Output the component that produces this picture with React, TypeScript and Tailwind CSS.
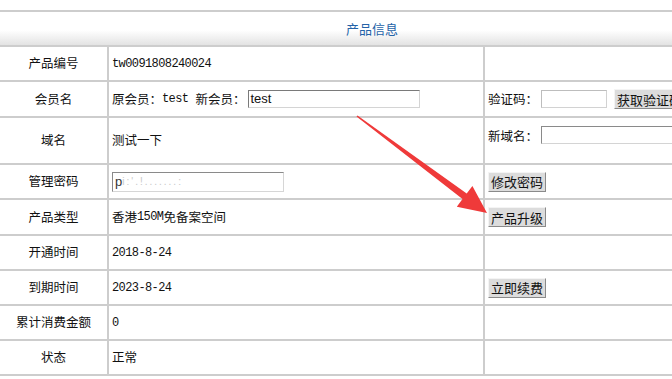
import React from "react";

const cjk = { fontFamily: '"Noto Sans CJK SC", "Noto Sans", sans-serif' };
const mono = { fontFamily: '"Liberation Mono", "Noto Sans CJK SC", monospace' };

function M({ children }: { children: React.ReactNode }) {
  return (
    <span style={mono} className="text-[12px] tracking-[-0.6px]">
      {children}
    </span>
  );
}

function Btn({ children }: { children: React.ReactNode }) {
  return (
    <div
      style={cjk}
      className="h-[20px] px-[2px] flex items-center bg-[#dcdcdc] border border-t-[#f4f4f4] border-l-[#f4f4f4] border-r-[#8a8a8a] border-b-[#8a8a8a] text-[13px] leading-none text-[#111] whitespace-nowrap"
    >
      {children}
    </div>
  );
}

function Row({
  label,
  mid,
  right,
  h = "h-[35px]",
  rightTop = false,
}: {
  label: string;
  mid?: React.ReactNode;
  right?: React.ReactNode;
  h?: string;
  rightTop?: boolean;
}) {
  return (
    <div className={`flex border-b-2 border-[#cdcdcd] ${h}`}>
      <div className="w-[109px] shrink-0 flex items-center justify-center border-r-2 border-[#cdcdcd] text-[12.5px] text-[#111]">
        {label}
      </div>
      <div className="w-[376px] shrink-0 flex items-center pl-[3px] border-r-2 border-[#cdcdcd] text-[12.5px] text-[#111] whitespace-nowrap">
        {mid}
      </div>
      <div
        className={`flex-1 flex pl-[3px] text-[12.5px] text-[#111] whitespace-nowrap ${
          rightTop ? "items-start pt-[8px]" : "items-center"
        }`}
      >
        {right}
      </div>
    </div>
  );
}

export default function App() {
  return (
    <div className="relative w-[672px] h-[379px] overflow-hidden bg-white" style={cjk}>
      <div className="w-[744px] mt-[10px] border-t-2 border-[#cdcdcd]">
        <div className="h-[35px] flex items-center justify-center border-b-2 border-[#cdcdcd] bg-linear-to-b from-white via-white via-55% to-[#e3e3e3] text-[13px] text-[#2563a8]">
          产品信息
        </div>
        <Row label="产品编号" mid={<M>tw0091808240024</M>} />
        <Row
          label="会员名"
          h="h-[36px]"
          mid={
            <>
              <span>原会员：</span>
              <M>test</M>
              <span className="ml-[7px]">新会员：</span>
              <div className="ml-[3px] w-[172px] h-[18px] border border-t-[#7a7a7a] border-l-[#7a7a7a] border-r-[#d4d4d4] border-b-[#d4d4d4] flex items-center pl-[1px] text-[13px] text-[#111]" style={{ fontFamily: '"Liberation Sans", Arial, sans-serif' }}>
                test
              </div>
            </>
          }
          right={
            <>
              <span>验证码：</span>
              <div className="ml-[3px] w-[66px] h-[18px] border border-[#d2d2d2] border-t-[#bdbdbd] border-l-[#bdbdbd]" />
              <div className="ml-[7px]">
                <Btn>获取验证码</Btn>
              </div>
            </>
          }
        />
        <Row
          label="域名"
          h="h-[47px]"
          mid={<span>测试一下</span>}
          rightTop
          right={
            <>
              <span className="mt-[1px]">新域名：</span>
              <div className="ml-[3px] w-[200px] h-[18px] border border-t-[#8a8a8a] border-l-[#8a8a8a] border-r-[#d4d4d4] border-b-[#d4d4d4]" />
            </>
          }
        />
        <Row
          label="管理密码"
          mid={
            <div className="w-[172px] h-[20px] border border-t-[#8a8a8a] border-l-[#8a8a8a] border-r-[#d6d6d6] border-b-[#d6d6d6] flex items-center pl-[2px] text-[13px]" style={{ fontFamily: '"Liberation Sans", Arial, sans-serif' }}>
              <span className="text-[#333]">p</span>
              <span className="text-[#c8c8c8] text-[10px] tracking-[2px]">i:'.!.......:</span>
            </div>
          }
          right={<Btn>修改密码</Btn>}
        />
        <Row
          label="产品类型"
          h="h-[36px]"
          mid={
            <>
              <span>香港</span>
              <M>150M</M>
              <span>免备案空间</span>
            </>
          }
          right={<Btn>产品升级</Btn>}
        />
        <Row label="开通时间" mid={<M>2018-8-24</M>} />
        <Row label="到期时间" mid={<M>2023-8-24</M>} right={<Btn>立即续费</Btn>} />
        <Row label="累计消费金额" mid={<M>0</M>} />
        <Row label="状态" mid={<span>正常</span>} />
      </div>
      <svg
        className="absolute left-0 top-0 pointer-events-none"
        width="672"
        height="379"
        viewBox="0 0 672 379"
      >
        <polygon
          points="357.5,115.4 466.7,193.5 472.4,185.9 487,213 456.8,206.7 462.5,199.1 356.5,116.6"
          fill="#ef3a3a"
        />
      </svg>
    </div>
  );
}
